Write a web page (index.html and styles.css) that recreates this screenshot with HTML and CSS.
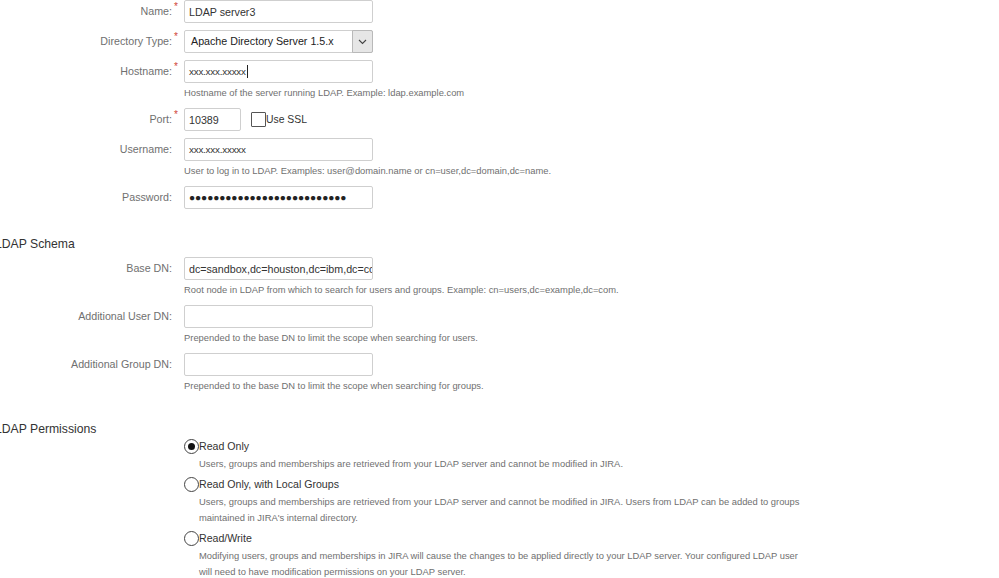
FILE: index.html
```html
<!DOCTYPE html>
<html lang="en">
<head>
<meta charset="utf-8">
<title>LDAP directory</title>
<link rel="stylesheet" href="styles.css">
</head>
<body>
<form class="ldap-form">
  <div class="field-row">
    <label class="field-label">Name:<span class="req">*</span></label>
    <div class="field-body"><input class="text-input" type="text" value="LDAP server3"></div>
  </div>
  <div class="field-row">
    <label class="field-label">Directory Type:<span class="req">*</span></label>
    <div class="field-body">
      <div class="select-box"><span class="select-value">Apache Directory Server 1.5.x</span><span class="select-btn"><svg width="9" height="6" viewBox="0 0 9 6"><path d="M1 1l3.5 3.5L8 1" fill="none" stroke="#444" stroke-width="1.1"/></svg></span></div>
    </div>
  </div>
  <div class="field-row">
    <label class="field-label">Hostname:<span class="req">*</span></label>
    <div class="field-body">
      <div class="text-input fake-input"><span class="mono-x">xxx.xxx.xxxxx</span><span class="caret"></span></div>
      <div class="help">Hostname of the server running LDAP. Example: ldap.example.com</div>
    </div>
  </div>
  <div class="field-row">
    <label class="field-label">Port:<span class="req">*</span></label>
    <div class="field-body port-line">
      <input class="text-input port-input" type="text" value="10389">
      <label class="check"><span class="check-box"></span>Use SSL</label>
    </div>
  </div>
  <div class="field-row">
    <label class="field-label">Username:</label>
    <div class="field-body">
      <div class="text-input fake-input"><span class="mono-x">xxx.xxx.xxxxx</span></div>
      <div class="help">User to log in to LDAP. Examples: user@domain.name or cn=user,dc=domain,dc=name.</div>
    </div>
  </div>
  <div class="field-row">
    <label class="field-label">Password:</label>
    <div class="field-body"><div class="text-input fake-input dots">&#9679;&#9679;&#9679;&#9679;&#9679;&#9679;&#9679;&#9679;&#9679;&#9679;&#9679;&#9679;&#9679;&#9679;&#9679;&#9679;&#9679;&#9679;&#9679;&#9679;&#9679;&#9679;&#9679;&#9679;&#9679;&#9679;</div></div>
  </div>

  <h3 class="section-title">LDAP Schema</h3>

  <div class="field-row">
    <label class="field-label">Base DN:</label>
    <div class="field-body">
      <div class="text-input fake-input clip">dc=sandbox,dc=houston,dc=ibm,dc=com</div>
      <div class="help">Root node in LDAP from which to search for users and groups. Example: cn=users,dc=example,dc=com.</div>
    </div>
  </div>
  <div class="field-row">
    <label class="field-label">Additional User DN:</label>
    <div class="field-body">
      <input class="text-input" type="text" value="">
      <div class="help">Prepended to the base DN to limit the scope when searching for users.</div>
    </div>
  </div>
  <div class="field-row">
    <label class="field-label">Additional Group DN:</label>
    <div class="field-body">
      <input class="text-input" type="text" value="">
      <div class="help">Prepended to the base DN to limit the scope when searching for groups.</div>
    </div>
  </div>

  <h3 class="section-title">LDAP Permissions</h3>

  <div class="perm-list">
    <div class="perm-option">
      <label class="radio-line"><span class="radio checked"></span>Read Only</label>
      <div class="perm-help">Users, groups and memberships are retrieved from your LDAP server and cannot be modified in JIRA.</div>
    </div>
    <div class="perm-option">
      <label class="radio-line"><span class="radio"></span>Read Only, with Local Groups</label>
      <div class="perm-help">Users, groups and memberships are retrieved from your LDAP server and cannot be modified in JIRA. Users from LDAP can be added to groups maintained in JIRA's internal directory.</div>
    </div>
    <div class="perm-option">
      <label class="radio-line"><span class="radio"></span>Read/Write</label>
      <div class="perm-help">Modifying users, groups and memberships in JIRA will cause the changes to be applied directly to your LDAP server. Your configured LDAP user will need to have modification permissions on your LDAP server.</div>
    </div>
  </div>
</form>
</body>
</html>
```

FILE: styles.css
```css
* { box-sizing: border-box; }

body {
  margin: 0;
  background: #fff;
  color: #333;
  font-family: "Liberation Sans", Arial, sans-serif;
}

.ldap-form {
  width: 999px;
}

.field-row {
  display: grid;
  grid-template-columns: 172px 1fr;
  column-gap: 12px;
  margin-bottom: 7px;
}

.field-label {
  position: relative;
  text-align: right;
  font-size: 10.7px;
  line-height: 23px;
  color: #707070;
}

.req {
  position: absolute;
  right: -6px;
  top: -5px;
  color: #d04437;
  font-size: 10px;
}

.field-body {
  min-width: 0;
}

.text-input {
  display: block;
  width: 189px;
  height: 23px;
  margin: 0;
  padding: 0 4px;
  border: 1px solid #cfcfcf;
  border-radius: 2px;
  background: #fff;
  font-family: "Liberation Sans", Arial, sans-serif;
  font-size: 10.7px;
  color: #333;
  outline: none;
}

.fake-input {
  display: flex;
  align-items: center;
  overflow: hidden;
  white-space: nowrap;
}

.mono-x {
  font-size: 9.8px;
  color: #333;
  letter-spacing: -0.2px;
}

.caret {
  display: inline-block;
  width: 1px;
  height: 13px;
  background: #222;
  margin-left: 1px;
}

.dots {
  font-size: 10.2px;
  letter-spacing: -0.1px;
  color: #222;
}

.clip {
  padding-right: 0;
}

.help {
  margin-top: 4px;
  padding-bottom: 2px;
  font-size: 9.4px;
  line-height: 12px;
  color: #707070;
  white-space: nowrap;
}

.select-box {
  display: flex;
  width: 189px;
  height: 23px;
  border: 1px solid #cfcfcf;
  border-radius: 2px;
  background: #fff;
}

.select-value {
  flex: 1;
  padding-left: 6px;
  font-size: 10.7px;
  line-height: 21px;
  color: #222;
}

.select-btn {
  display: flex;
  align-items: center;
  justify-content: center;
  width: 21px;
  margin: -1px -1px -1px 0;
  border: 1px solid #b9b9b9;
  border-radius: 0 2px 2px 0;
  background: #e6e6e6;
}

.port-line {
  display: flex;
  align-items: center;
}

.port-input {
  width: 57px;
}

.check {
  display: flex;
  align-items: center;
  margin-left: 10px;
  font-size: 10.4px;
  color: #333;
}

.check-box {
  width: 15px;
  height: 15px;
  border: 1px solid #555;
  border-radius: 1px;
  background: #fff;
}

.section-title {
  margin: 27px 0 5px -5px;
  font-size: 12.2px;
  font-weight: normal;
  line-height: 16px;
  color: #333;
}

.perm-list {
  margin-left: 184px;
  margin-top: -3px;
}

.perm-option {
  margin-bottom: 5px;
}

.radio-line {
  display: flex;
  align-items: center;
  height: 14px;
  font-size: 10.6px;
  color: #333;
}

.radio {
  position: relative;
  width: 15px;
  height: 15px;
  border: 1px solid #444;
  border-radius: 50%;
  background: #fff;
}

.radio.checked::after {
  content: "";
  position: absolute;
  left: 3px;
  top: 3px;
  width: 7px;
  height: 7px;
  border-radius: 50%;
  background: #111;
}

.perm-help {
  max-width: 623px;
  margin-top: 3px;
  padding-left: 15px;
  font-size: 9.4px;
  line-height: 16px;
  color: #707070;
}
```
